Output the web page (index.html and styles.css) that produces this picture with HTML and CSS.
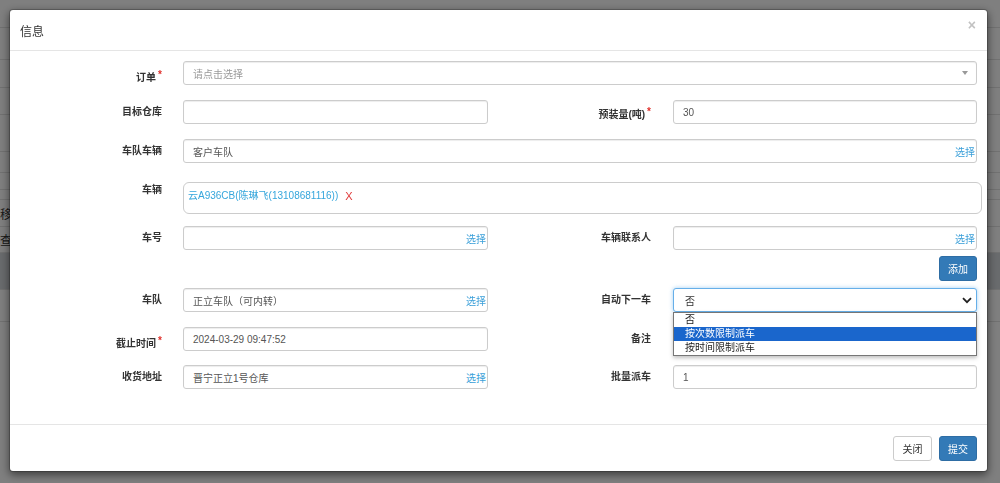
FILE: index.html
```html
<!DOCTYPE html>
<html lang="zh-CN">
<head>
<meta charset="utf-8">
<title>信息</title>
<link rel="stylesheet" href="styles.css">
</head>
<body>
<div class="page">
  <div class="pr pr-28"></div>
  <div class="pr pr-32"></div>
  <div class="pr pr-28"></div>
  <div class="pr pr-27"></div>
  <div class="pr pr-37"></div>
  <div class="pr pr-21"></div>
  <div class="pr pr-17"></div>
  <div class="pr pr-10"></div>
  <div class="pr pr-27"><span class="bg-text">移</span></div>
  <div class="pr pr-26"><span class="bg-text">查</span></div>
  <div class="pr pr-37 pr-band"></div>
  <div class="pr pr-32"></div>
</div>

<div class="backdrop">
  <div class="modal">
    <div class="modal-header">
      <h4 class="modal-title">信息</h4>
      <span class="close">×</span>
    </div>
    <div class="modal-body">
      <div class="row">
        <label class="lbl req">订单<span class="star">*</span></label>
        <div class="ctrl span3">
          <div class="input"><span class="ph">请点击选择</span><span class="caret"></span></div>
        </div>
      </div>

      <div class="row">
        <label class="lbl">目标仓库</label>
        <div class="ctrl"><div class="input"></div></div>
        <label class="lbl lbl-r req req-sm">预装量(吨)<span class="star">*</span></label>
        <div class="ctrl"><div class="input">30</div></div>
      </div>

      <div class="row gap19">
        <label class="lbl">车队车辆</label>
        <div class="ctrl span3">
          <div class="input pick"><span>客户车队</span><a class="pick-link">选择</a></div>
        </div>
      </div>

      <div class="row gap12">
        <label class="lbl lbl-top">车辆</label>
        <div class="ctrl span3">
          <div class="tagbox"><span class="tag">云A936CB(陈琳飞(13108681116))</span><span class="tag-x">X</span></div>
        </div>
      </div>

      <div class="row gap6">
        <label class="lbl">车号</label>
        <div class="ctrl"><div class="input pick"><span></span><a class="pick-link">选择</a></div></div>
        <label class="lbl lbl-r">车辆联系人</label>
        <div class="ctrl"><div class="input pick"><span></span><a class="pick-link">选择</a></div></div>
      </div>

      <div class="row gap7">
        <div class="btn-cell"><button class="btn btn-primary">添加</button></div>
      </div>

      <div class="row">
        <label class="lbl">车队</label>
        <div class="ctrl"><div class="input pick"><span>正立车队（可内转）</span><a class="pick-link">选择</a></div></div>
        <label class="lbl lbl-r">自动下一车</label>
        <div class="ctrl select-wrap">
          <div class="input select-open"><span>否</span>
            <svg class="chev" width="10" height="7" viewBox="0 0 10 7"><path d="M1 1.2 L5 5.2 L9 1.2" fill="none" stroke="#222" stroke-width="1.8"/></svg>
          </div>
          <ul class="dropdown">
            <li>否</li>
            <li class="active">按次数限制派车</li>
            <li>按时间限制派车</li>
          </ul>
        </div>
      </div>

      <div class="row gap14">
        <label class="lbl req">截止时间<span class="star">*</span></label>
        <div class="ctrl"><div class="input">2024-03-29 09:47:52</div></div>
        <label class="lbl lbl-r">备注</label>
        <div class="ctrl"><div class="input"></div></div>
      </div>

      <div class="row last">
        <label class="lbl">收货地址</label>
        <div class="ctrl"><div class="input pick"><span>晋宁正立1号仓库</span><a class="pick-link">选择</a></div></div>
        <label class="lbl lbl-r">批量派车</label>
        <div class="ctrl"><div class="input">1</div></div>
      </div>
    </div>
    <div class="modal-footer">
      <button class="btn btn-default">关闭</button>
      <button class="btn btn-primary">提交</button>
    </div>
  </div>
</div>
</body>
</html>
```

FILE: styles.css
```css
* { box-sizing: border-box; }
html, body { margin: 0; height: 100%; }
body {
  font-family: "Liberation Sans", "Noto Sans CJK SC", sans-serif;
  font-size: 10px;
  color: #333;
  background: #fff;
  overflow: hidden;
}

/* background page */
.page { width: 100%; }
.pr { border-bottom: 1px solid #e2e2e2; display: flex; align-items: center; font-size: 12px; color: #333; }
.pr-10 { height: 10px; }
.pr-17 { height: 17px; }
.pr-21 { height: 21px; }
.pr-26 { height: 26px; }
.pr-27 { height: 27px; }
.pr-28 { height: 28px; }
.pr-32 { height: 32px; }
.pr-37 { height: 37px; }
.pr-band { background: #d2d6da; }
.bg-text { margin-left: 0; }

/* overlay */
.backdrop {
  position: fixed;
  inset: 0;
  background: rgba(0, 0, 0, 0.5);
  padding: 9px;
}
.modal {
  width: 979px;
  background: #fff;
  border: 1px solid rgba(0, 0, 0, 0.2);
  border-radius: 4px;
  box-shadow: 0 3px 9px rgba(0, 0, 0, 0.5);
  background-clip: padding-box;
}
.modal-header {
  height: 41px;
  display: flex;
  align-items: center;
  justify-content: space-between;
  padding: 0 11px 0 10px;
  border-bottom: 1px solid #e5e5e5;
}
.modal-title { margin: 0; font-size: 12px; font-weight: normal; color: #333; }
.close {
  align-self: flex-start;
  margin-top: 8px;
  font-size: 14px;
  line-height: 14px;
  color: #c2c2c2;
  font-weight: bold;
}
.modal-body { padding: 10px 10px 35px 14px; }

.row {
  display: grid;
  grid-template-columns: 159px 305px 185px 304px;
  align-items: center;
  margin-bottom: 15px;
}
.row.gap19 { margin-bottom: 19px; }
.row.gap14 { margin-bottom: 14px; }
.row.gap12 { margin-bottom: 12px; }
.row.gap7 { margin-bottom: 7px; }
.row.gap6 { margin-bottom: 6px; }
.row.last { margin-bottom: 0; }

.lbl {
  text-align: right;
  padding-right: 21px;
  font-weight: bold;
  font-size: 10px;
  line-height: 12px;
  color: #333;
}
.lbl-r { padding-right: 22px; }
.lbl.req { padding-top: 6px; }
.lbl.req-sm { padding-top: 3px; }
.lbl-top { align-self: start; padding-top: 2px; }
.star { color: #e0302b; margin-left: 2px; vertical-align: 3px; font-weight: bold; }

.span3 { grid-column: 2 / 5; }
.ctrl { position: relative; }

.input {
  height: 24px;
  border: 1px solid #ccc;
  border-radius: 3px;
  padding: 0 9px;
  display: flex;
  align-items: center;
  color: #555;
  font-size: 10px;
  background: #fff;
  box-shadow: inset 0 1px 1px rgba(0, 0, 0, 0.075);
  white-space: nowrap;
}
.ph { color: #999; }
.caret {
  margin-left: auto;
  margin-right: -1px;
  width: 0;
  height: 0;
  border-left: 3px solid transparent;
  border-right: 3px solid transparent;
  border-top: 4px solid #999;
}
.input.pick { padding-right: 1px; }
.pick-link { margin-left: auto; color: #3a9fd9; font-size: 10px; }

.tagbox {
  height: 32px;
  margin-right: -5px;
  border: 1px solid #ccc;
  border-radius: 6px;
  padding: 7px 4px 0;
  display: flex;
  align-items: flex-start;
  line-height: 12px;
  font-size: 10px;
}
.tag { color: #35a6dc; }
.tag-x { color: #e03a3a; margin-left: 7px; font-size: 11px; }

.btn-cell { grid-column: 1 / 5; display: flex; justify-content: flex-end; }
.btn {
  height: 25px;
  width: 38px;
  padding: 0;
  border-radius: 3px;
  font-family: inherit;
  font-size: 10px;
  border: 1px solid transparent;
  cursor: pointer;
}
.btn-primary { background: #337ab7; border-color: #2e6da4; color: #fff; }
.btn-default { background: #fff; border-color: #ccc; color: #333; width: 39px; }

.select-open {
  border-color: #66afe9;
  box-shadow: 0 0 4px rgba(102, 175, 233, 0.6);
  padding-left: 11px;
  padding-right: 4px;
  color: #333;
  justify-content: space-between;
}
.dropdown {
  position: absolute;
  top: 100%;
  left: 0;
  right: 0;
  margin: 0;
  padding: 0;
  list-style: none;
  background: #fff;
  border: 1px solid #767676;
  box-shadow: 0 2px 4px rgba(0, 0, 0, 0.25);
  z-index: 5;
}
.dropdown li {
  height: 14px;
  line-height: 14px;
  padding-left: 11px;
  font-size: 10px;
  color: #222;
}
.dropdown li.active { background: #1a66cc; color: #fff; }

.modal-footer {
  border-top: 1px solid #e5e5e5;
  padding: 11px 10px 10px;
  display: flex;
  justify-content: flex-end;
  gap: 7px;
}
```
